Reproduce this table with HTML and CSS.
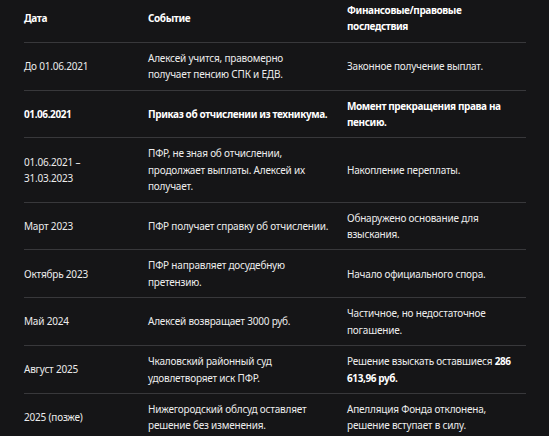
FILE: index.html
```html
<!DOCTYPE html>
<html lang="ru">
<head>
<meta charset="utf-8">
<link rel="stylesheet" href="styles.css">
</head>
<body>
<table class="timeline">
  <colgroup>
    <col class="c-date">
    <col class="c-event">
    <col class="c-result">
  </colgroup>
  <thead>
    <tr>
      <th>Дата</th>
      <th>Событие</th>
      <th>Финансовые/правовые последствия</th>
    </tr>
  </thead>
  <tbody>
    <tr>
      <td>До 01.06.2021</td>
      <td>Алексей учится, правомерно<br>получает пенсию СПК и ЕДВ.</td>
      <td>Законное получение выплат.</td>
    </tr>
    <tr class="strong">
      <td>01.06.2021</td>
      <td>Приказ об отчислении из техникума.</td>
      <td>Момент прекращения права на пенсию.</td>
    </tr>
    <tr>
      <td>01.06.2021 – 31.03.2023</td>
      <td>ПФР, не зная об отчислении, продолжает выплаты. Алексей их получает.</td>
      <td>Накопление переплаты.</td>
    </tr>
    <tr>
      <td>Март 2023</td>
      <td>ПФР получает справку об отчислении.</td>
      <td>Обнаружено основание для взыскания.</td>
    </tr>
    <tr>
      <td>Октябрь 2023</td>
      <td>ПФР направляет досудебную претензию.</td>
      <td>Начало официального спора.</td>
    </tr>
    <tr>
      <td>Май 2024</td>
      <td>Алексей возвращает 3000 руб.</td>
      <td>Частичное, но недостаточное погашение.</td>
    </tr>
    <tr>
      <td>Август 2025</td>
      <td>Чкаловский районный суд удовлетворяет иск ПФР.</td>
      <td>Решение взыскать оставшиеся <b>286 613,96 руб.</b></td>
    </tr>
    <tr>
      <td>2025 (позже)</td>
      <td>Нижегородский облсуд оставляет решение без изменения.</td>
      <td>Апелляция Фонда отклонена, решение вступает в силу.</td>
    </tr>
  </tbody>
</table>
</body>
</html>
```
FILE: styles.css
```css
html, body {
  margin: 0;
  background: #151517;
}
body {
  padding: 0 23px 0 24px;
  font-family: "Noto Sans", "Open Sans", sans-serif;
  font-size: 10px;
  line-height: 16.4px;
  letter-spacing: -0.2px;
  color: #ececec;
}
.timeline {
  width: 502px;
  table-layout: fixed;
  border-collapse: collapse;
}
.c-date { width: 124px; }
.c-event { width: 199px; }
.c-result { width: 179px; }
.timeline th,
.timeline td {
  text-align: left;
  vertical-align: middle;
  padding: 7px 18px 7px 0;
}
.timeline th:last-child,
.timeline td:last-child {
  padding-right: 10px;
}
.timeline th {
  font-weight: 700;
  letter-spacing: -0.4px;
  color: #ffffff;
  padding-top: 2px;
  padding-bottom: 7px;
}
.timeline thead tr,
.timeline tbody tr {
  border-bottom: 1px solid #38383b;
}
.timeline tbody tr:last-child {
  border-bottom: none;
}
.timeline .strong td,
.timeline b {
  font-weight: 700;
  letter-spacing: -0.4px;
  color: #ffffff;
}
```
